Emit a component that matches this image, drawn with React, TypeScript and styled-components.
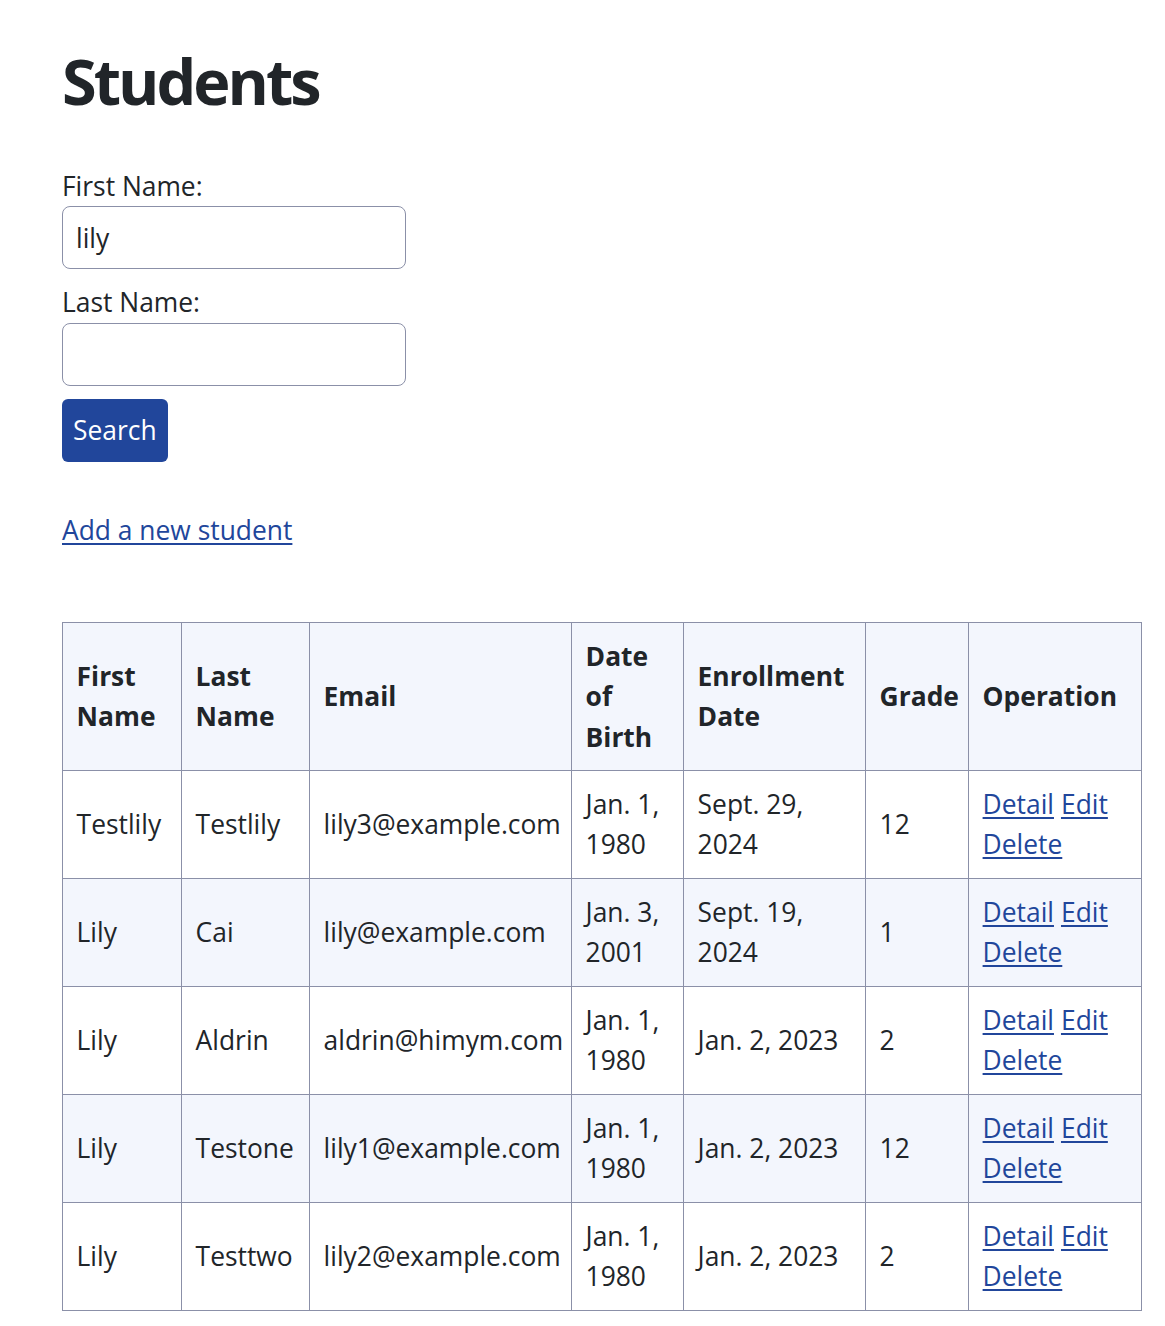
import React from "react";
import styled, { createGlobalStyle } from "styled-components";

const GlobalStyle = createGlobalStyle`
  html, body {
    margin: 0;
    padding: 0;
    background: #ffffff;
  }
  body {
    font-family: "Open Sans", "Noto Sans", "Liberation Sans", sans-serif;
    font-size: 26.4px;
    line-height: 40.5px;
    color: #212529;
  }
  * { box-sizing: border-box; }
`;

const Page = styled.main`
  padding: 40px 23px 16px 62px;
`;

const Title = styled.h1`
  margin: 0 0 44px;
  font-size: 63px;
  line-height: 81.6px;
  font-weight: 700;
  letter-spacing: -3px;
  color: #212529;
`;

const SearchForm = styled.form`
  display: flex;
  flex-direction: column;
  align-items: flex-start;
`;

const Field = styled.div`
  display: flex;
  flex-direction: column;
  margin-bottom: 13px;
`;

const Label = styled.label`
  display: block;
`;

const TextInput = styled.input`
  width: 344px;
  height: 63px;
  padding: 0 13px;
  border: 1px solid #8b90a8;
  border-radius: 8px;
  font: inherit;
  color: #212529;
  background: #fff;
  outline: none;
`;

const SearchButton = styled.button`
  height: 63px;
  padding: 0 11px;
  border: none;
  border-radius: 6px;
  background: #21469b;
  color: #ffffff;
  font: inherit;
  cursor: pointer;
`;

const AddLine = styled.p`
  margin: 48px 0 72px;
`;

const Link = styled.a`
  color: #21469b;
  text-decoration: underline;
  text-underline-offset: 3px;
  text-decoration-thickness: 2px;
`;

const Table = styled.table`
  width: 1079px;
  table-layout: fixed;
  border-collapse: collapse;
  border: 1px solid #8b90a8;
`;

const HeadCell = styled.th`
  padding: 12.5px 13.6px;
  border: 1px solid #8b90a8;
  background: #f3f6fd;
  text-align: left;
  vertical-align: middle;
  font-weight: 700;
`;

const Row = styled.tr<{ $striped: boolean }>`
  background: ${(p) => (p.$striped ? "#f3f6fd" : "#ffffff")};
`;

const Cell = styled.td`
  padding: 13px 13.6px;
  border: 1px solid #8b90a8;
  vertical-align: middle;
  text-align: left;
`;

const OpLink = styled(Link)`
  margin-right: 7px;
`;

const columns = [
  { label: "First Name", width: 119 },
  { label: "Last Name", width: 128 },
  { label: "Email", width: 262 },
  { label: "Date of Birth", width: 112 },
  { label: "Enrollment Date", width: 182 },
  { label: "Grade", width: 103 },
  { label: "Operation", width: 173 },
];

const students = [
  { first: "Testlily", last: "Testlily", email: "lily3@example.com", dob: "Jan. 1, 1980", enrolled: "Sept. 29, 2024", grade: "12" },
  { first: "Lily", last: "Cai", email: "lily@example.com", dob: "Jan. 3, 2001", enrolled: "Sept. 19, 2024", grade: "1" },
  { first: "Lily", last: "Aldrin", email: "aldrin@himym.com", dob: "Jan. 1, 1980", enrolled: "Jan. 2, 2023", grade: "2" },
  { first: "Lily", last: "Testone", email: "lily1@example.com", dob: "Jan. 1, 1980", enrolled: "Jan. 2, 2023", grade: "12" },
  { first: "Lily", last: "Testtwo", email: "lily2@example.com", dob: "Jan. 1, 1980", enrolled: "Jan. 2, 2023", grade: "2" },
];

export default function App() {
  return (
    <>
      <GlobalStyle />
      <Page>
        <Title>Students</Title>
        <SearchForm onSubmit={(e) => e.preventDefault()}>
          <Field>
            <Label htmlFor="first">First Name:</Label>
            <TextInput id="first" defaultValue="lily" />
          </Field>
          <Field>
            <Label htmlFor="last">Last Name:</Label>
            <TextInput id="last" defaultValue="" />
          </Field>
          <SearchButton type="submit">Search</SearchButton>
        </SearchForm>
        <AddLine>
          <Link href="#">Add a new student</Link>
        </AddLine>
        <Table>
          <colgroup>
            {columns.map((c) => (
              <col key={c.label} style={{ width: c.width }} />
            ))}
          </colgroup>
          <thead>
            <tr>
              {columns.map((c) => (
                <HeadCell key={c.label}>{c.label}</HeadCell>
              ))}
            </tr>
          </thead>
          <tbody>
            {students.map((s, i) => (
              <Row key={s.email} $striped={i % 2 === 1}>
                <Cell>{s.first}</Cell>
                <Cell>{s.last}</Cell>
                <Cell>{s.email}</Cell>
                <Cell>{s.dob}</Cell>
                <Cell>{s.enrolled}</Cell>
                <Cell>{s.grade}</Cell>
                <Cell>
                  <OpLink href="#">Detail</OpLink>
                  <Link href="#">Edit</Link> <Link href="#">Delete</Link>
                </Cell>
              </Row>
            ))}
          </tbody>
        </Table>
      </Page>
    </>
  );
}
